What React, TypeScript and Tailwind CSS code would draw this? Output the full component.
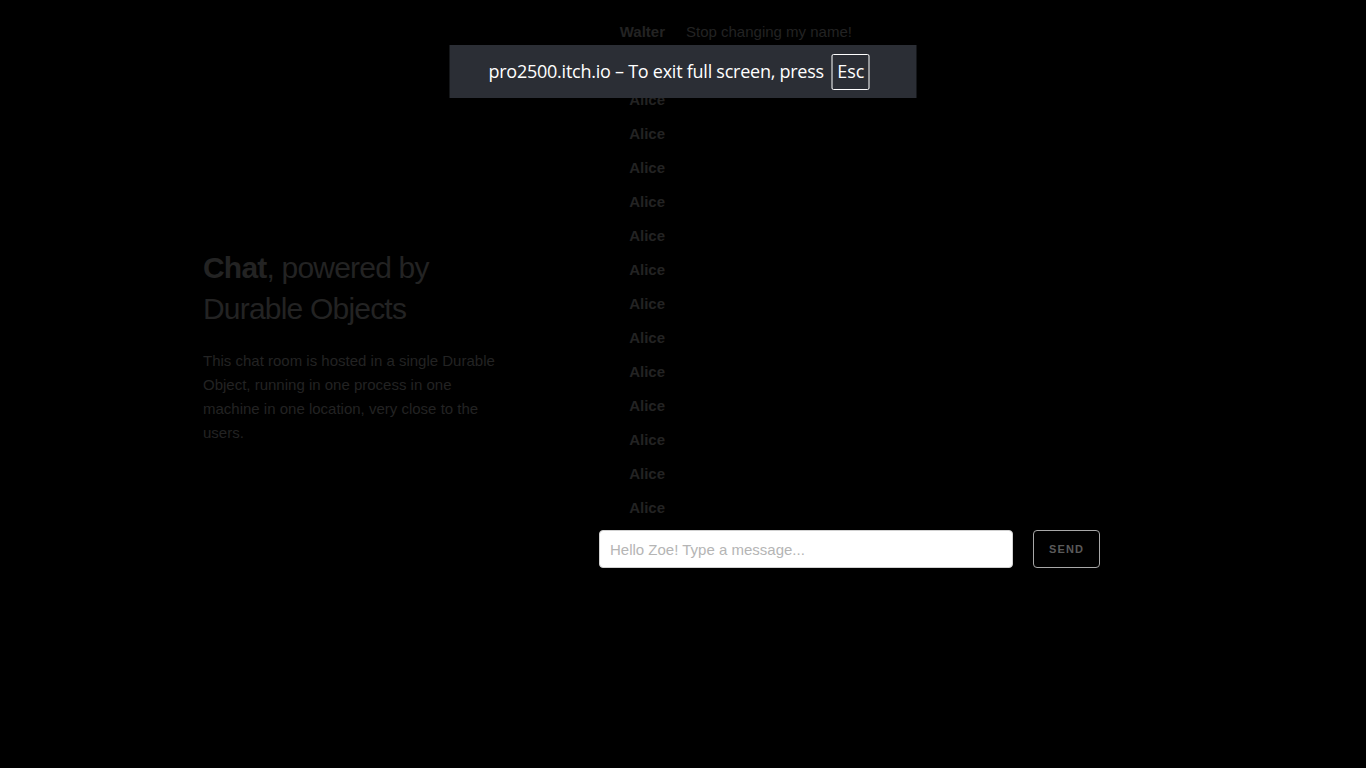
import React from 'react';

const messages: { name: string; text?: string }[] = [
  { name: 'Walter', text: 'Stop changing my name!' },
  ...Array.from({ length: 14 }, () => ({ name: 'Alice' })),
];

export default function App() {
  return (
    <div className="relative h-[768px] w-full overflow-hidden bg-black font-['Liberation_Sans',Arial,sans-serif]">
      <div className="flex">
        {/* intro */}
        <div className="ml-[203px] w-[305px] pt-[247px]">
          <h1 className="text-[30px] leading-[41px] text-[#232323] tracking-[-0.8px]">
            <span className="font-bold">Chat</span>, powered by Durable Objects
          </h1>
          <p className="mt-[20px] text-[15px] leading-[24px] text-[#232323]">
            This chat room is hosted in a single Durable Object, running in one process in one machine in one
            location, very close to the users.
          </p>
        </div>

        {/* chat */}
        <div className="ml-[91px] pt-[15px]">
          <div className="flex flex-col">
            {messages.map((m, i) => (
              <div key={i} className="flex h-[34px] items-center text-[15px] text-[#232323]">
                <span className="w-[66px] text-right font-bold">{m.name}</span>
                <span className="ml-[21px]">{m.text}</span>
              </div>
            ))}
          </div>
          <div className="mt-[5px] flex items-center">
            <input
              className="h-[38px] w-[414px] rounded-[4px] border border-[#d1d1d1] bg-white px-[10px] text-[15px] text-[#333] outline-none placeholder:text-[#b5b5b5]"
              placeholder="Hello Zoe! Type a message..."
            />
            <button className="ml-[20px] h-[38px] w-[67px] rounded-[4px] border border-[#a8a8a8] text-[11px] font-bold tracking-[0.1em] text-[#5a5a5a]">
              SEND
            </button>
          </div>
        </div>
      </div>

      {/* fullscreen notice */}
      <div className="absolute left-1/2 top-[45px] flex h-[53px] w-[467px] -translate-x-1/2 items-center bg-[#2b2e35] pl-[39px] font-['Open_Sans','DejaVu_Sans',sans-serif] text-[18px] text-white">
        <span className="tracking-[-0.25px]">pro2500.itch.io – To exit full screen, press</span>
        <span className="ml-[8px] flex h-[36px] w-[38px] items-center justify-center rounded-[2px] border border-white">
          Esc
        </span>
      </div>
    </div>
  );
}
